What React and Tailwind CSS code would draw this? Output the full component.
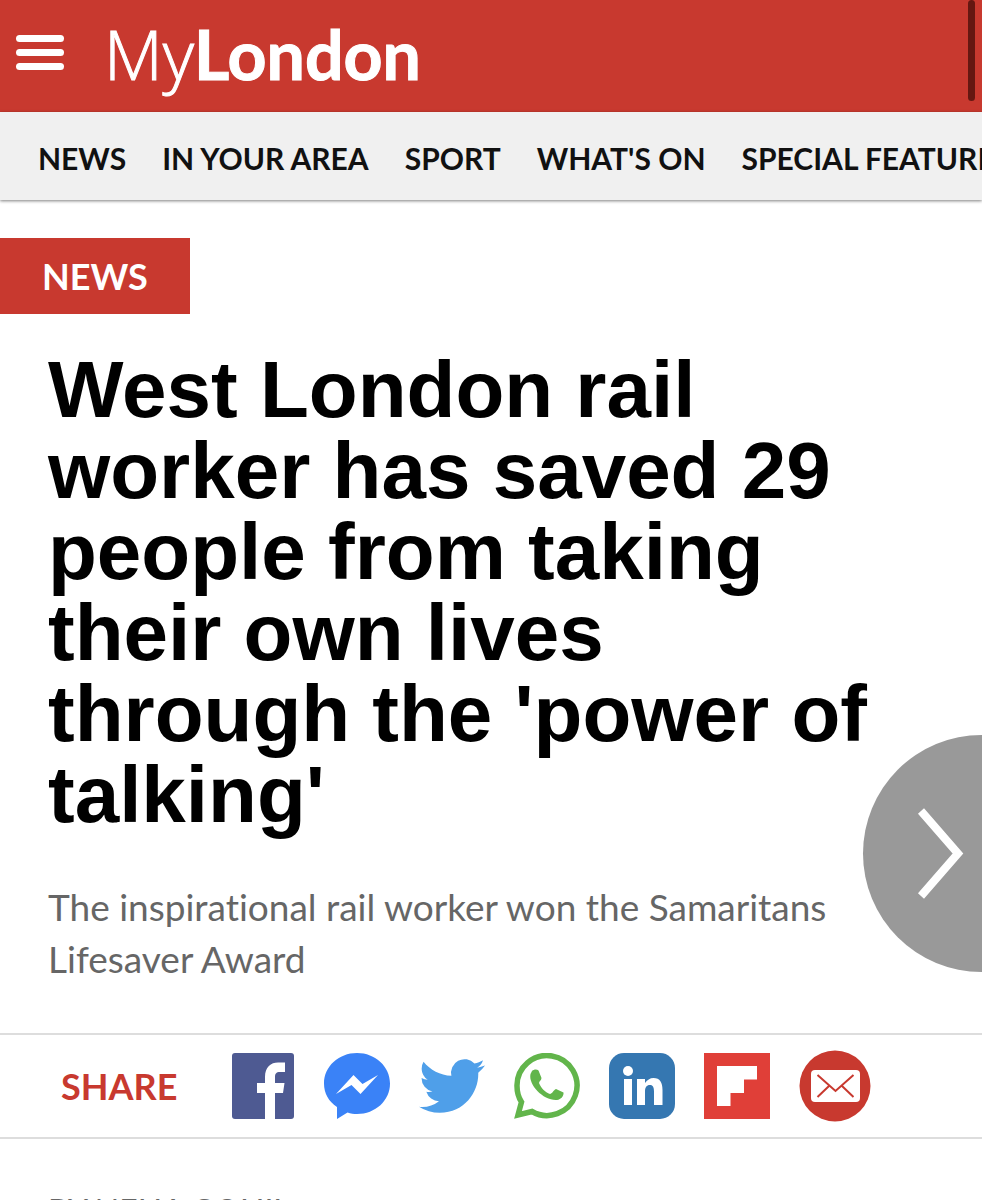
import React from "react";

const NAV_ITEMS = [
  "NEWS",
  "IN YOUR AREA",
  "SPORT",
  "WHAT'S ON",
  "SPECIAL FEATURES",
];

const FacebookIcon = () => (
  <svg className="h-[66px] w-[63px]" viewBox="0 0 63 66" aria-hidden="true">
    <rect width="62" height="66" rx="3" fill="#4e5a92" />
    <path
      d="M33 66V40H25V30H33V24C33 14 39 9.500 46 9.500H53V19H48C44 19 43 21 43 24V30H52.500L51 40H43V66Z"
      fill="#fff"
    />
  </svg>
);

const MessengerIcon = () => (
  <svg className="h-[66px] w-[66px]" viewBox="0 0 66 66" aria-hidden="true">
    <path
      d="M33 0C14.500 0 0 13.500 0 30.500C0 40 4.500 48.500 13 54V66L23.500 59.500C26.500 60.500 30 61 33 61C51.500 61 66 47.500 66 30.500S51.500 0 33 0Z"
      fill="#3a82f7"
    />
    <path d="M12 41L29.500 22L38.500 31L54 22L36.500 41L27.500 32Z" fill="#fff" />
  </svg>
);

const TwitterIcon = () => (
  <svg className="h-[66px] w-[66px]" viewBox="0 0 24 24" aria-hidden="true">
    <path
      d="M23.953 4.570a10 10 0 01-2.825.775 4.958 4.958 0 002.163-2.723c-.951.555-2.005.959-3.127 1.184a4.920 4.920 0 00-8.384 4.482C7.690 8.095 4.067 6.130 1.640 3.162a4.822 4.822 0 00-.666 2.475c0 1.710.870 3.213 2.188 4.096a4.904 4.904 0 01-2.228-.616v.060a4.923 4.923 0 003.946 4.827 4.996 4.996 0 01-2.212.085 4.936 4.936 0 004.604 3.417 9.867 9.867 0 01-6.102 2.105c-.390 0-.779-.023-1.170-.067a13.995 13.995 0 007.557 2.209c9.053 0 13.998-7.496 13.998-13.985 0-.210 0-.420-.015-.630A9.935 9.935 0 0024 4.590z"
      fill="#4f9fe9"
    />
  </svg>
);

const WhatsappIcon = () => (
  <svg className="h-[66px] w-[66px]" viewBox="0 0 66 66" aria-hidden="true">
    <path
      d="M4 62L7.500 49C4.500 44.500 3 39 3 33A30 30 0 1 1 18 58.500Z"
      fill="none"
      stroke="#62b54b"
      strokeWidth="5.500"
    />
    <path
      d="M18 18C20 16 23 16 24.500 17.500L27.500 25C27.500 27 25 28.500 25 30C27 35 31 39 36 41C38 41 39.500 37 42 36L49.500 39.500C50 43 47 46.500 43 47C30 48 14 32 16.500 21Z"
      fill="#62b54b"
    />
  </svg>
);

const LinkedinIcon = () => (
  <svg className="h-[66px] w-[66px]" viewBox="0 0 66 66" aria-hidden="true">
    <rect width="66" height="66" rx="15" fill="#3577b1" />
    <circle cx="19" cy="18" r="5" fill="#fff" />
    <path
      d="M15 26H23V52H15ZM28 26H36V30C38 27 41 25 44.500 25C51 25 53.500 29.500 53.500 37V52H45V38.500C45 34.500 44 32 41 32C37.500 32 36 34.500 36 38.500V52H28Z"
      fill="#fff"
    />
  </svg>
);

const FlipboardIcon = () => (
  <svg className="h-[66px] w-[66px]" viewBox="0 0 66 66" aria-hidden="true">
    <path d="M0 0H66V66H0Z" fill="#e03f38" />
    <path d="M13 13H53V26.500H40V40H26.500V53H13Z" fill="#fff" />
  </svg>
);

const EmailIcon = () => (
  <svg className="h-[72px] w-[72px]" viewBox="0 0 72 72" aria-hidden="true">
    <circle cx="36" cy="36" r="35.500" fill="#c8392f" />
    <rect x="12" y="20" width="49" height="32" rx="4" fill="#fff" />
    <path
      d="M18.500 25L36.500 41L54.500 25M18.500 47L30 36M54.500 47L43 36"
      fill="none"
      stroke="#c8392f"
      strokeWidth="2"
    />
  </svg>
);

const SHARE_LINKS = [
  { name: "Facebook", Icon: FacebookIcon },
  { name: "Messenger", Icon: MessengerIcon },
  { name: "Twitter", Icon: TwitterIcon },
  { name: "WhatsApp", Icon: WhatsappIcon },
  { name: "LinkedIn", Icon: LinkedinIcon },
  { name: "Flipboard", Icon: FlipboardIcon },
  { name: "Email", Icon: EmailIcon },
];

const Header = () => (
  <header className="flex h-28 items-center bg-[#c8392f] pl-4 text-white">
    <button
      type="button"
      aria-label="Open menu"
      className="mb-2 flex w-12 flex-col gap-[7px]"
    >
      <span className="h-[7px] w-full rounded-full bg-white" />
      <span className="h-[7px] w-full rounded-full bg-white" />
      <span className="h-[7px] w-full rounded-full bg-white" />
    </button>
    <a
      href="#home"
      className="mb-1 ml-10 font-['Open_Sans',sans-serif] text-[68px] leading-none font-light [-webkit-text-stroke:1px_white]"
    >
      My<span className="font-['Lato',sans-serif] font-bold">London</span>
    </a>
  </header>
);

const App = () => {
  return (
    <div className="relative h-screen overflow-hidden bg-white font-['Lato',sans-serif]">
      <Header />
      {/* Scroll indicator */}
      <div className="absolute top-0 right-[7px] h-[101px] w-[7px] rounded-full bg-[#651711]" />

      <nav className="flex h-[88px] items-center gap-9 overflow-hidden bg-[#f0f0f0] pt-1 pl-[38px] shadow-[0_1px_3px_rgba(0,0,0,0.5)]">
        {NAV_ITEMS.map((item) => (
          <a
            key={item}
            href="#section"
            className="text-[30px] font-bold whitespace-nowrap text-[#111]"
          >
            {item}
          </a>
        ))}
      </nav>

      <main>
        <a
          href="#news"
          className="mt-[38px] inline-flex h-[76px] items-center bg-[#c8392f] px-[42px] text-[36px] font-bold text-white"
        >
          NEWS
        </a>
        <h1 className="mt-[35px] pr-20 pl-12 font-['Liberation_Sans',Arial,sans-serif] text-[80px] leading-[81px] font-bold text-black">
          West London rail worker has saved 29 people from taking their own
          lives through the 'power of talking'
        </h1>
        <p className="mt-[46px] pr-32 pl-12 text-[37px] leading-[52px] text-[#666] [font-variant-ligatures:none]">
          The inspirational rail worker won the Samaritans Lifesaver Award
        </p>

        <div className="mt-12 flex h-[106px] items-center border-y-2 border-[#ddd] pl-[61px]">
          <span className="w-[171px] text-[36px] font-bold text-[#c8392f]">
            SHARE
          </span>
          <div className="flex items-center gap-[29px]">
            {SHARE_LINKS.map(({ name, Icon }) => (
              <a key={name} href="#share" aria-label={`Share on ${name}`}>
                <Icon />
              </a>
            ))}
          </div>
        </div>

        <p className="pt-[52px] pl-12 text-[32px] leading-[40px] text-[#666]">
          BY NEHA GOHIL
        </p>
      </main>

      <button
        type="button"
        aria-label="Next article"
        className="absolute top-[735px] right-0 h-[237px] w-[119px] overflow-hidden rounded-l-full bg-[#999]"
      >
        <svg
          className="h-full w-full"
          viewBox="0 0 119 237"
          fill="none"
          aria-hidden="true"
        >
          <path d="M58 76L95 118.500L58 161" stroke="#fff" strokeWidth="8" />
        </svg>
      </button>
    </div>
  );
};

export default App;
